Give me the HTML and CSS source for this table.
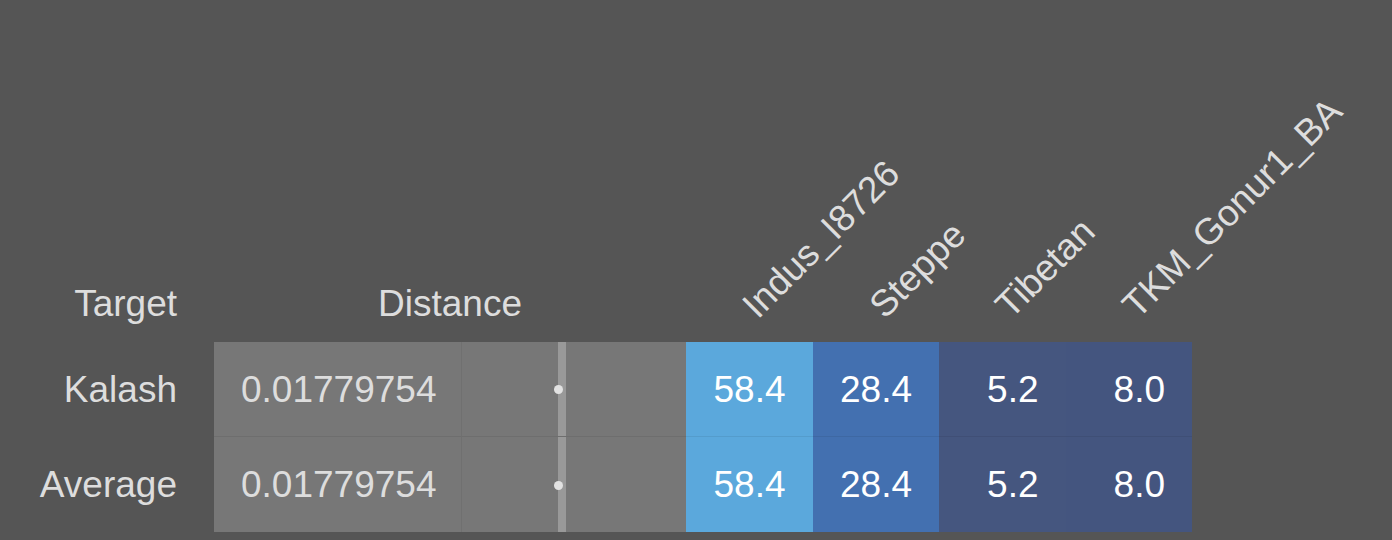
FILE: index.html
```html
<!DOCTYPE html>
<html>
<head>
<meta charset="utf-8">
<link rel="stylesheet" href="styles.css">
</head>
<body>
<div class="table">
  <div class="head head-target">Target</div>
  <div class="head head-distance">Distance</div>
  <div class="head head-pop"><span class="rot">Indus_I8726</span></div>
  <div class="head head-pop"><span class="rot">Steppe</span></div>
  <div class="head head-pop"><span class="rot">Tibetan</span></div>
  <div class="head head-pop"><span class="rot">TKM_Gonur1_BA</span></div>

  <div class="label">Kalash</div>
  <div class="cell dist first">0.01779754</div>
  <div class="cell barcell first"><div class="track"><span class="dot"></span></div></div>
  <div class="cell val c1 first">58.4</div>
  <div class="cell val c2 first">28.4</div>
  <div class="cell val c3 first">5.2</div>
  <div class="cell val c4 first">8.0</div>

  <div class="label">Average</div>
  <div class="cell dist">0.01779754</div>
  <div class="cell barcell"><div class="track"><span class="dot"></span></div></div>
  <div class="cell val c1">58.4</div>
  <div class="cell val c2">28.4</div>
  <div class="cell val c3">5.2</div>
  <div class="cell val c4">8.0</div>
</div>
</body>
</html>
```
FILE: styles.css
```css
html, body {
  margin: 0;
  padding: 0;
  background: #555555;
}
body {
  font-family: "Liberation Sans", Arial, Helvetica, sans-serif;
  font-size: 37px;
  line-height: 37px;
  color: #dddddd;
  overflow: hidden;
}
.table {
  display: grid;
  grid-template-columns: 214px 248px 224px repeat(4, 126.5px);
  grid-template-rows: 342px 95px 95px;
}
.head {
  display: flex;
  align-items: flex-end;
  padding-bottom: 20px;
  box-sizing: border-box;
  white-space: nowrap;
}
.head-target {
  justify-content: flex-end;
  padding-right: 37px;
}
.head-distance {
  grid-column: span 2;
  justify-content: center;
}
.head-pop {
  padding-bottom: 16px;
}
.rot {
  display: block;
  margin-left: 72px;
  transform-origin: 0 31.3px;
  transform: rotate(-45deg);
}
.label {
  display: flex;
  align-items: center;
  justify-content: flex-end;
  padding-right: 37px;
}
.cell {
  display: flex;
  align-items: center;
  box-sizing: border-box;
}
.first {
  border-bottom: 1px solid rgba(0, 0, 0, 0.07);
}
.dist {
  background: #777777;
  padding-left: 27px;
  border-right: 1px solid rgba(0, 0, 0, 0.05);
}
.barcell {
  background: #777777;
  align-items: stretch;
  padding-left: 96px;
}
.track {
  position: relative;
  width: 8px;
  background: #999999;
}
.dot {
  position: absolute;
  left: -4px;
  top: calc(50% - 4px);
  width: 9px;
  height: 9px;
  border-radius: 50%;
  background: #e2e2e2;
}
.val {
  justify-content: flex-end;
  padding-right: 27px;
  color: #ffffff;
}
.c1 { background: #5ba8dc; }
.c2 { background: #4370b0; }
.c3 { background: #45567f; }
.c4 { background: #44557f; }
```
